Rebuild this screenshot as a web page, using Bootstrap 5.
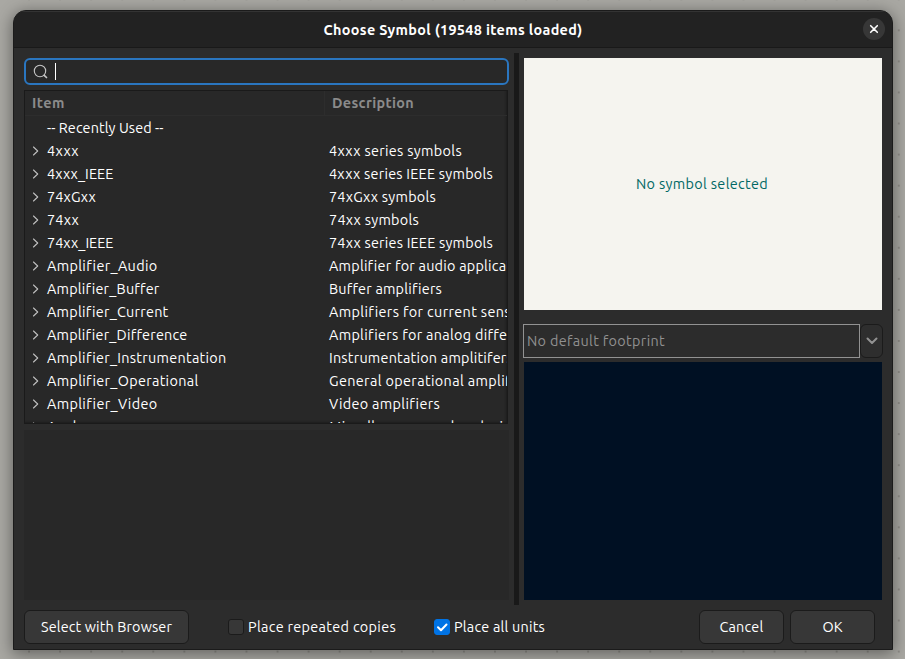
<!DOCTYPE html>
<html lang="en" data-bs-theme="dark">
<head>
<meta charset="utf-8">
<meta name="viewport" content="width=device-width, initial-scale=1">
<title>Choose Symbol</title>
<link rel="stylesheet" href="https://cdn.jsdelivr.net/npm/bootstrap@5.3.0/dist/css/bootstrap.min.css">
<style>
body{width:905px;height:659px;padding:10px 12px 9px 13px;font:14.4px/23px Ubuntu,"Noto Sans",sans-serif;color:#fff;
 background:radial-gradient(circle at 50% 50%,#85837e 0 .5px,transparent 1.1px) 13.5px 14.8px/31.07px 31.07px #a9a8a3}
.dialog-window{background:#2c2c2c;border:1px solid #1b1b1b;border-radius:13px 13px 0 0;box-shadow:0 3px 16px 1px rgba(0,0,0,.42);overflow:hidden}
.titlebar{height:37px;flex:none;background:#222;border-bottom:1px solid #191919;box-shadow:inset 0 1px #333;padding:0 7px}
.titlebar .fw-bold{padding-top:2px}
.titlebar .side{width:22px}
.close-btn{width:22px;height:22px;background:#373737;border:0;padding:0}
.main-area{height:557px;padding:5px 9px 0 10px}
.left-pane{width:485px;padding-top:5px}
.splitter{width:5px;height:552px;background:#191919;margin-left:5px}
.right-pane{width:360px;margin-left:4px;padding-top:5px}
.search-box{height:27px;border:2px solid #2a76c0;border-radius:6px;background:#282828;padding-left:7px}
.search-box svg{margin-top:-1px}
.caret{width:1px;height:17px;background:#fff;margin-left:7px}
.symbol-tree{width:484px;height:334px;margin-top:5px;background:#282828;border:1px solid #1a1a1a;overflow:hidden;box-shadow:inset -2px -2px 2px -1px #1d1d1d}
.tree-head{height:25px;border-bottom:1px solid #2d2d2d;color:#8b8b8b;font-weight:700;line-height:24px;flex:none}
.c1{width:301px;flex:none}
.tree-head .c1{padding-left:7px;border-right:1px solid #2d2d2d;width:300px}
.tree-head .c2{padding-left:7px}
#rows{padding-top:1px}
.tree-row{height:23px;flex:none;white-space:nowrap}
.tree-row .c2{padding-left:3px;overflow:hidden}
.arrow{width:22px;flex:none;padding-left:7px;line-height:0;margin-top:-2px}
.detail-box{height:170px;margin-top:6px;background:#282828}
.symbol-view{width:358px;height:252px;margin-left:1px;padding-right:2px;background:#f5f4ef;color:#006864}
.fp-select{height:34px;margin-top:14px;color:#909090}
.fp-text{width:337px;border:1px solid #929292;padding-left:3px}
.fp-btn{width:23px;border:1px solid #1b1b1b;border-radius:6px;background:#2e2e2e}
.footprint-view{width:358px;height:238px;margin:4px 0 0 1px;background:#001023}
.footer-bar{height:34px;margin-top:5px;padding:0 17px 0 10px}
.dlg-btn{height:34px;width:85px;background:#373737;border:1px solid #1b1b1b;border-radius:6px;color:#fff;font:inherit;padding:0}
.dlg-btn.wide{width:165px}
.dlg-btn.ok{margin-left:6px}
.opt-repeat{margin-left:39px}
.opt-units{margin-left:38px}
.chk{width:16px;height:16px;border:1px solid #1b1b1b;border-radius:3px;background:#373737;margin-right:4px}
.chk.on{background:#0073e5;border-color:#0073e5}
svg{display:block;fill:none;stroke-linecap:round;stroke-linejoin:round}
[data-w]{white-space:nowrap}
</style>
<script src="https://cdn.jsdelivr.net/npm/bootstrap@5.3.0/dist/js/bootstrap.bundle.min.js"></script>
</head>
<body class="vh-100 overflow-hidden">
<div class="dialog-window h-100 d-flex flex-column">
  <header class="titlebar d-flex align-items-center justify-content-between">
    <span class="side"></span>
    <span class="fw-bold" data-w="259">Choose Symbol (19548 items loaded)</span>
    <button class="close-btn rounded-circle d-flex align-items-center justify-content-center" aria-label="Close"><svg width="10" height="10" stroke="#fff" stroke-width="1.6"><path d="M1.700 1.700l6.600 6.600M8.300 1.700l-6.600 6.600"/></svg></button>
  </header>
  <main class="main-area d-flex">
    <section class="left-pane">
      <div class="search-box d-flex align-items-center">
        <svg width="15" height="15" stroke="#c6c6c6" stroke-width="1.1"><circle cx="7" cy="7" r="5.700"/><path d="M11.200 11.300l2.300 2.200" stroke-width="1.700"/></svg><span class="caret"></span>
      </div>
      <div class="symbol-tree d-flex flex-column">
        <div class="tree-head d-flex"><div class="c1"><span data-w="33">Item</span></div><div class="c2"><span data-w="82">Description</span></div></div>
        <div id="rows" class="d-flex flex-column"></div>
      </div>
      <div class="detail-box"></div>
    </section>
    <div class="splitter"></div>
    <section class="right-pane">
      <div class="symbol-view d-flex align-items-center justify-content-center"><span data-w="132">No symbol selected</span></div>
      <div class="fp-select d-flex">
        <div class="fp-text d-flex align-items-center"><span data-w="138">No default footprint</span></div>
        <div class="fp-btn d-flex align-items-center justify-content-center"><svg width="12" height="8" stroke="#929292" stroke-width="2"><path d="M1.500 1.500L6 6l4.500-4.500"/></svg></div>
      </div>
      <div class="footprint-view"></div>
    </section>
  </main>
  <footer class="footer-bar d-flex align-items-center">
    <button class="dlg-btn wide"><span data-w="131">Select with Browser</span></button>
    <label class="opt-repeat d-flex align-items-center"><span class="chk"></span><span data-w="148">Place repeated copies</span></label>
    <label class="opt-units d-flex align-items-center"><span class="chk on"><svg width="14" height="14" stroke="#fff" stroke-width="2"><path d="M3 7.200l3 3 5.500-5.700"/></svg></span><span data-w="91">Place all units</span></label>
    <button class="dlg-btn ms-auto"><span data-w="44">Cancel</span></button>
    <button class="dlg-btn ok"><span data-w="20">OK</span></button>
  </footer>
</div>
<script>
// name, name width, description, description width
const items = [
 ["-- Recently Used --",116.5,"",0],
 ["4xxx",32,"4xxx series symbols",133],
 ["4xxx_IEEE",66.5,"4xxx series IEEE symbols",164],
 ["74xGxx",49,"74xGxx symbols",107],
 ["74xx",32,"74xx symbols",90],
 ["74xx_IEEE",66.5,"74xx series IEEE symbols",164],
 ["Amplifier_Audio",110,"Amplifier for audio applications",210],
 ["Amplifier_Buffer",112,"Buffer amplifiers",112.5],
 ["Amplifier_Current",121,"Amplifiers for current sensing",202.5],
 ["Amplifier_Difference",140,"Amplifiers for analog differences",222],
 ["Amplifier_Instrumentation",179,"Instrumentation amplitifers",184],
 ["Amplifier_Operational",151,"General operational amplifiers",206.5],
 ["Amplifier_Video",110,"Video amplifiers",110.5],
 ["Analog",47,"Miscellaneous analog devices",196]
];
document.getElementById("rows").innerHTML = items.map(([n,w,d,dw],i)=>
 `<div class="tree-row d-flex align-items-center"><div class="c1 d-flex align-items-center"><span class="arrow">${i?'<svg width="8" height="10" stroke="#c0c0c0" stroke-width="1.100"><path d="M1.500 1l4.200 4-4.200 4"/></svg>':''}</span><span data-w="${w}">${n}</span></div><div class="c2">${d?`<span data-w="${dw}">${d}</span>`:''}</div></div>`).join("");
// spread each label's letters to its nominal width
document.querySelectorAll("[data-w]").forEach(e=>{
  const s=(e.dataset.w-e.getBoundingClientRect().width)/e.textContent.length;
  e.style.letterSpacing=s.toFixed(3)+"px";
});
</script>
</body>
</html>
